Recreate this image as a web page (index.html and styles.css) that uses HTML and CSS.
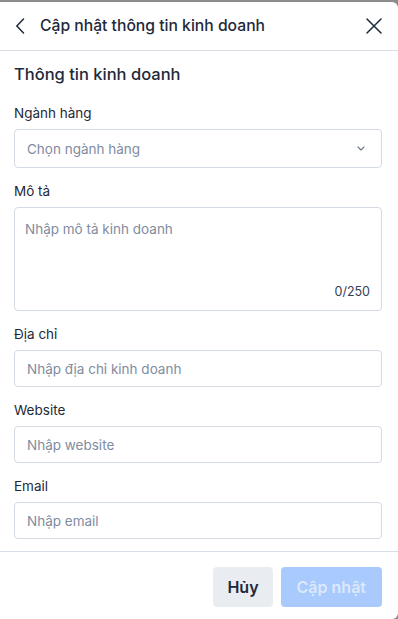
FILE: index.html
```html
<!DOCTYPE html>
<html lang="vi">
<head>
  <meta charset="UTF-8" />
  <meta name="viewport" content="width=device-width, initial-scale=1.0"/>
  <title>Cập nhật thông tin kinh doanh</title>
  <link rel="stylesheet" href="styles.css">
</head>
<body>

  <div class="panel">
    <div class="panel-header">
      <button class="icon-btn back-btn" aria-label="Quay lại">
        <svg width="10" height="16" viewBox="0 0 10 16" fill="none">
          <path d="M8.5 1 L1.8 8 L8.5 15" stroke="#1e293b" stroke-width="1.5" stroke-linecap="round" stroke-linejoin="round"/>
        </svg>
      </button>
      <div class="panel-title">Cập nhật thông tin kinh doanh</div>
      <button class="icon-btn close-btn" aria-label="Đóng">
        <svg width="16" height="16" viewBox="0 0 16 16" fill="none">
          <path d="M1 1 L15 15 M15 1 L1 15" stroke="#1e293b" stroke-width="1.5" stroke-linecap="round"/>
        </svg>
      </button>
    </div>

    <div class="panel-body">
      <h3 class="section-title">Thông tin kinh doanh</h3>

      <div class="field">
        <label class="field-label">Ngành hàng</label>
        <div class="select">
          <span class="placeholder">Chọn ngành hàng</span>
          <svg width="8" height="5" viewBox="0 0 8 5" fill="none">
            <path d="M1 1 L4 4 L7 1" stroke="#6b7685" stroke-width="1.1" stroke-linecap="round" stroke-linejoin="round"/>
          </svg>
        </div>
      </div>

      <div class="field">
        <label class="field-label">Mô tả</label>
        <div class="textarea">
          <span class="placeholder">Nhập mô tả kinh doanh</span>
          <span class="counter">0/250</span>
        </div>
      </div>

      <div class="field">
        <label class="field-label">Địa chỉ</label>
        <div class="input"><span class="placeholder">Nhập địa chỉ kinh doanh</span></div>
      </div>

      <div class="field">
        <label class="field-label">Website</label>
        <div class="input"><span class="placeholder">Nhập website</span></div>
      </div>

      <div class="field">
        <label class="field-label">Email</label>
        <div class="input"><span class="placeholder">Nhập email</span></div>
      </div>
    </div>

    <div class="panel-footer">
      <button class="btn btn-cancel">Hủy</button>
      <button class="btn btn-primary" disabled>Cập nhật</button>
    </div>
  </div>

</body>
</html>
```

FILE: styles.css
```css
* {
  box-sizing: border-box;
}

html, body {
  height: 100%;
}

body {
  margin: 0;
  background: #8c8c8c;
  font-family: Inter, "Noto Sans", sans-serif;
  color: #1e293b;
  overflow: hidden;
}

.panel {
  margin-top: 2px;
  height: calc(100% - 2px);
  background: #fff;
  border-radius: 0 6px 6px 0;
  display: flex;
  flex-direction: column;
}

.panel-header {
  height: 49px;
  display: flex;
  align-items: center;
  padding: 0 16px 0 14px;
  border-bottom: 1px solid #d8dee6;
}

.icon-btn {
  background: transparent;
  border: 0;
  padding: 0;
  display: flex;
  align-items: center;
  justify-content: center;
  cursor: pointer;
}

.back-btn {
  width: 12px;
  height: 20px;
  margin-right: 14px;
}

.close-btn {
  width: 16px;
  height: 20px;
  margin-left: auto;
}

.panel-title {
  font-size: 15.7px;
  line-height: 20px;
  font-weight: 500;
}

.panel-body {
  flex: 1;
  padding: 12px 16px 12px 14px;
}

.section-title {
  margin: 0 0 18px;
  font-size: 16.5px;
  line-height: 22px;
  font-weight: 500;
}

.field + .field {
  margin-top: 13px;
}

.field-label {
  display: block;
  font-size: 13.5px;
  line-height: 20px;
  margin-bottom: 6px;
  color: #1f2937;
}

.placeholder {
  color: #7f8ca1;
  font-size: 13.5px;
  line-height: 20px;
}

.select,
.input,
.textarea {
  border: 1px solid #d5dbe3;
  border-radius: 4px;
  background: #fff;
}

.select {
  height: 39px;
  display: flex;
  align-items: center;
  justify-content: space-between;
  padding: 0 16px 0 12px;
}

.input {
  height: 37px;
  display: flex;
  align-items: center;
  padding: 0 12px;
}

.textarea {
  height: 104px;
  padding: 10px 10px;
  position: relative;
}

.counter {
  position: absolute;
  right: 11px;
  bottom: 9px;
  font-size: 12.5px;
  line-height: 18px;
  color: #334155;
}

.panel-footer {
  display: flex;
  justify-content: flex-end;
  gap: 8px;
  padding: 15px 16px 12px;
  border-top: 1px solid #d8dee6;
}

.btn {
  height: 40px;
  border: 0;
  border-radius: 4px;
  font-family: inherit;
  font-size: 16px;
  font-weight: 600;
  cursor: pointer;
}

.btn-cancel {
  background: #e9edf1;
  color: #1e293b;
  padding: 0 14px;
}

.btn-primary {
  background: #a9cafc;
  color: #dbe8fd;
  padding: 0 16px;
}
```
